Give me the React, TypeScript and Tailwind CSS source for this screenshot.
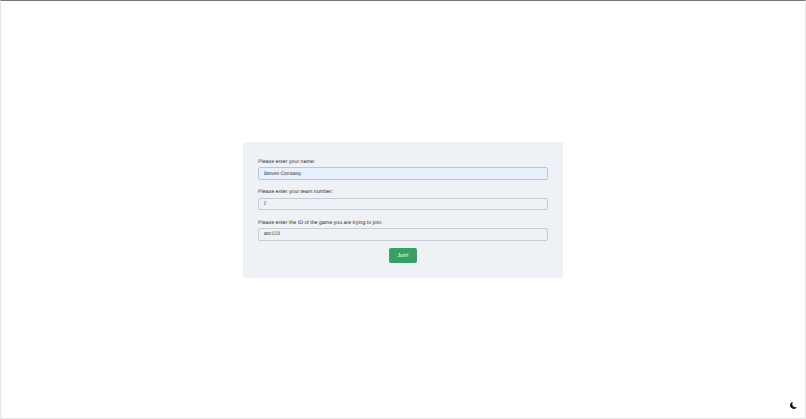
import { BsMoonFill } from "react-icons/bs";

const fields = [
  { label: "Please enter your name:", value: "Steven Conaway", bg: "bg-[#e8f0fe]", border: "border-[#bcc5d3]" },
  { label: "Please enter your team number:", value: "2", bg: "bg-[#eef2f6]", border: "border-[#c6ccd3]" },
  { label: "Please enter the ID of the game you are trying to join:", value: "abc123", bg: "bg-[#eef2f6]", border: "border-[#c6ccd3]" },
];

export default function App() {
  return (
    <div className="relative flex h-[419px] w-[806px] items-center justify-center overflow-hidden border border-t-[#777777] border-x-[#e5e5e5] border-b-[#e5e5e5] bg-white font-['Liberation_Sans',sans-serif] [text-rendering:geometricPrecision]">
      <form className="mt-[1px] flex w-[320px] flex-col rounded-[3px] bg-[#eef2f6] px-[15px] pb-[15px] pt-[16px]">
        <div className="flex flex-col gap-[8.3px]">
          {fields.map((f) => (
            <div key={f.label} className="flex flex-col gap-[1.5px]">
              <label className="text-[5.25px] leading-[8px] text-[#2b3138]">{f.label}</label>
              <input
                readOnly
                value={f.value}
                className={`h-[12.5px] w-full rounded-[2px] border ${f.border} ${f.bg} px-[4.5px] text-[5px] text-[#2b3138] outline-none [text-rendering:geometricPrecision]`}
              />
            </div>
          ))}
        </div>
        <button
          type="button"
          className="mx-auto mt-[7.5px] flex h-[15px] w-[28px] items-center justify-center rounded-[2px] bg-[#37a164] text-[5.25px] text-white"
        >
          Join!
        </button>
      </form>
      <BsMoonFill className="absolute bottom-[9px] right-[8.5px] h-[7px] w-[7px] text-[#14191f]" />
    </div>
  );
}
